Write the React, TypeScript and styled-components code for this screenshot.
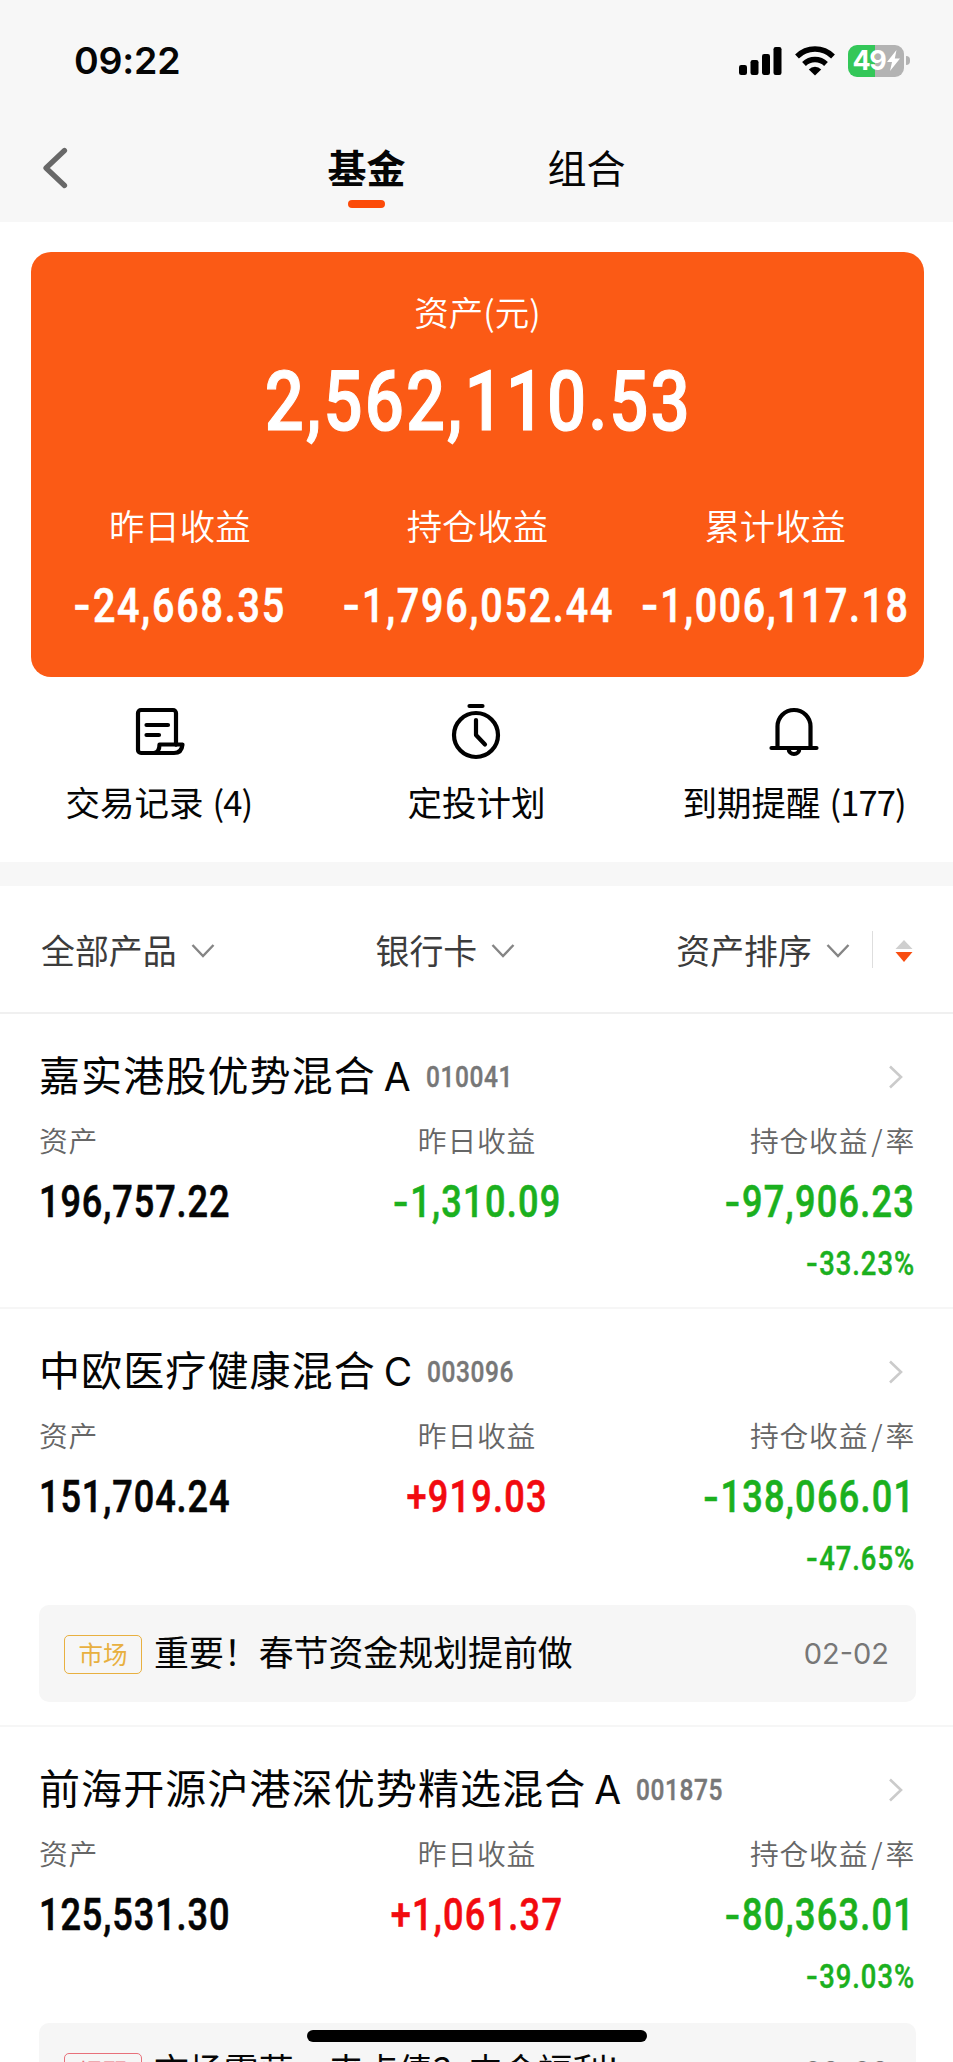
import React from "react";
import styled, { createGlobalStyle } from "styled-components";

const CJK = `"Noto Sans CJK SC", sans-serif`;

const GlobalStyle = createGlobalStyle`
  * { box-sizing: border-box; }
  body { margin: 0; background: #fff; }
`;

const Screen = styled.div`
  position: relative;
  width: 953px;
  height: 2062px;
  overflow: hidden;
  background: #fff;
  color: #050505;
  font-family: ${CJK};
`;

const Header = styled.header`
  height: 222px;
  background: #f7f7f7;
`;

const StatusBar = styled.div`
  height: 121px;
  padding: 0 44px 0 74px;
  display: flex;
  align-items: center;
  justify-content: space-between;
`;

const Clock = styled.span`
  font: 600 37.5px/1 Inter, sans-serif;
  letter-spacing: -0.2px;
`;

const StatusIcons = styled.div`
  display: flex;
  align-items: center;
  gap: 13px;
`;

const Battery = styled.div`
  position: relative;
  width: 56px;
  height: 32px;
  border-radius: 9px;
  background: linear-gradient(90deg, #34c759 49%, #b3b3b3 49%);
  display: flex;
  align-items: center;
  justify-content: center;
  gap: 1px;
  color: #fff;
  font: 700 27px/1 Inter, sans-serif;
  letter-spacing: -1.4px;
  margin-right: 5px;
`;

const BatteryCap = styled.i`
  position: absolute;
  left: 58px;
  top: 11px;
  width: 4px;
  height: 9px;
  border-radius: 0 5px 5px 0;
  background: #b3b3b3;
`;

const NavBar = styled.nav`
  height: 101px;
  display: grid;
  grid-template-columns: 257px 219px 221px;
`;

const Back = styled.div`
  padding: 26px 0 0 41px;
`;

const Tab = styled.div<{ $active?: boolean }>`
  display: flex;
  flex-direction: column;
  align-items: center;
  padding-top: 20px;
  font-size: 39px;
  line-height: 50px;
  font-weight: ${(p) => (p.$active ? 700 : 400)};
  &::after {
    content: "";
    width: 37px;
    height: 8px;
    margin-top: 9px;
    border-radius: 4px;
    background: ${(p) => (p.$active ? "#fc4a08" : "transparent")};
  }
`;

const Card = styled.section`
  width: 893px;
  height: 425px;
  margin: 30px 0 0 31px;
  border-radius: 20px;
  background: #fb5a15;
  color: #fff;
  text-align: center;
`;

const CardLabel = styled.div`
  padding-top: 35px;
  font-size: 34.5px;
  line-height: 48px;
  font-weight: 350;
`;

const CardTotal = styled.div`
  height: 134px;
  padding-left: 2px;
  display: flex;
  align-items: center;
  justify-content: center;
`;

const CardColumns = styled.div`
  padding-top: 32px;
  display: grid;
  grid-template-columns: repeat(3, minmax(0, 1fr));
`;

const CardColumn = styled.div`
  display: flex;
  flex-direction: column;
  align-items: center;
  font-size: 35.4px;
  line-height: 48px;
  font-weight: 350;
  gap: 33px;
`;

type Align = "left" | "center" | "right";

interface FigureStyle {
  $size: number;
  $color?: string;
  $align?: Align;
  $scale?: number;
  $track?: number;
}

const Figure = styled.span<FigureStyle>`
  display: inline-block;
  font-family: Roboto, sans-serif;
  font-weight: 500;
  font-size: ${(p) => p.$size}px;
  line-height: 48px;
  white-space: nowrap;
  color: ${(p) => p.$color ?? "inherit"};
  letter-spacing: ${(p) => p.$track ?? 0}px;
  -webkit-text-stroke: ${(p) => p.$size * 0.014}px currentColor;
  transform: scaleX(${(p) => p.$scale ?? 0.83});
  transform-origin: ${(p) => p.$align ?? "left"} center;
`;

const Sign = styled.span`
  font-family: Inter, sans-serif;
  line-height: 0;
`;

function Amount({ value, ...style }: FigureStyle & { value: string }) {
  const signed = value[0] === "-";
  return (
    <Figure {...style}>
      {signed && <Sign>-</Sign>}
      {signed ? value.slice(1) : value}
    </Figure>
  );
}

const Actions = styled.section`
  height: 185px;
  display: grid;
  grid-template-columns: repeat(3, 1fr);
`;

const Action = styled.div`
  display: flex;
  flex-direction: column;
  align-items: center;
  padding-top: 22px;
  font-size: 34.5px;
  line-height: 48px;
  svg { display: block; }
`;

const ActionLabel = styled.div`
  margin-top: 13px;
  display: flex;
  gap: 9px;
`;

const Count = styled.span`
  letter-spacing: -0.9px;
`;

const Band = styled.div`
  height: 24px;
  background: #f7f7f7;
`;

const Filters = styled.div`
  height: 128px;
  border-bottom: 2px solid #f0f0f0;
  padding: 1px 40px 0 41px;
  display: flex;
  align-items: center;
  font-size: 33.9px;
  line-height: 48px;
  color: #3c3c3c;
`;

const Filter = styled.div<{ $gap: number }>`
  display: flex;
  flex: none;
  align-items: center;
  gap: 14px;
  margin-right: ${(p) => p.$gap}px;
  white-space: nowrap;
  svg { margin-top: 3px; }
`;

const Divider = styled.i`
  width: 1.5px;
  height: 37px;
  background: #dedede;
  margin-right: 23px;
`;

const SortArrows = styled.div`
  display: flex;
  padding-top: 2px;
`;

const Fund = styled.article<{ $height: number }>`
  height: ${(p) => p.$height}px;
  border-bottom: 2px solid #f6f6f6;
  padding: 31px 38px 0 39px;
`;

const FundHead = styled.div`
  height: 60px;
  display: flex;
  align-items: center;
`;

const FundName = styled.h2`
  margin: 0;
  font-size: 41px;
  line-height: 60px;
  font-weight: 400;
  letter-spacing: 1.1px;
`;

const ClassLetter = styled.span`
  margin-left: 8px;
  font-family: Inter, sans-serif;
  font-size: 39px;
  font-weight: 400;
  letter-spacing: 0;
`;

const FundCode = styled.div`
  margin-left: 15px;
  padding-top: 4px;
  flex: 1;
  display: flex;
`;

const HeadArrow = styled.div`
  margin-right: 11px;
  padding-top: 4px;
  display: flex;
`;

const Stats = styled.div`
  display: grid;
  grid-template-columns: 270px 1fr 270px;
  padding-top: 13px;
`;

const Stat = styled.div<{ $align: Align }>`
  display: flex;
  flex-direction: column;
  align-items: ${(p) =>
    p.$align === "left" ? "flex-start" : p.$align === "right" ? "flex-end" : "center"};
`;

const StatLabel = styled.div`
  font-size: 28.8px;
  line-height: 43px;
  letter-spacing: 0.8px;
  font-weight: 350;
  color: #666;
  margin-bottom: 18px;
`;

const Slash = styled.span`
  margin: 0 2px 0 3px;
`;

const Percent = styled.div`
  margin-top: 13px;
  display: flex;
`;

const Notice = styled.div`
  width: 877px;
  height: 97px;
  margin-top: 22px;
  padding: 0 27px 0 25px;
  border-radius: 10px;
  background: #f6f6f6;
  display: flex;
  align-items: center;
`;

const Tag = styled.span<{ $color: string }>`
  width: 78px;
  height: 39px;
  margin-top: 1px;
  border: 1.5px solid ${(p) => p.$color};
  border-radius: 5px;
  color: ${(p) => p.$color};
  font-size: 24.5px;
  line-height: 35px;
  text-align: center;
`;

const NoticeText = styled.span`
  flex: 1;
  margin: -5px 0 0 12px;
  font-size: 34.9px;
  line-height: 48px;
  white-space: pre;
`;

const NoticeDate = styled.span`
  font: 400 29px/40px Inter, sans-serif;
  color: #777;
`;

const HomeIndicator = styled.div`
  position: absolute;
  left: 307px;
  top: 2030px;
  width: 340px;
  height: 12px;
  border-radius: 6px;
  background: #000;
`;

const GREEN = "#1bb01e";
const RED = "#f20a0f";

function ChevronDown() {
  return (
    <svg width="24" height="16" viewBox="0 0 24 16" fill="none">
      <path d="M1.5 2 12 13 22.5 2" stroke="#858585" strokeWidth="2.4" />
    </svg>
  );
}

interface FundData {
  name: string;
  letter: string;
  code: string;
  asset: string;
  day: string;
  held: string;
  rate: string;
  height: number;
  notice?: { tag: string; color: string; text: string; date: string };
}

const funds: FundData[] = [
  { name: "嘉实港股优势混合", letter: "A", code: "010041", asset: "196,757.22", day: "-1,310.09", held: "-97,906.23", rate: "-33.23%", height: 295 },
  {
    name: "中欧医疗健康混合", letter: "C", code: "003096", asset: "151,704.24", day: "+919.03", held: "-138,066.01", rate: "-47.65%", height: 418,
    notice: { tag: "市场", color: "#e8b040", text: "重要！春节资金规划提前做", date: "02-02" },
  },
  {
    name: "前海开源沪港深优势精选混合", letter: "A", code: "001875", asset: "125,531.30", day: "+1,061.37", held: "-80,363.01", rate: "-39.03%", height: 418,
    notice: { tag: "提醒", color: "#e8707a", text: "市场震荡，来点债？内含福利!", date: "02-02" },
  },
];

function FundRow({ fund }: { fund: FundData }) {
  return (
    <Fund $height={fund.height}>
      <FundHead>
        <FundName>
          {fund.name}
          <ClassLetter>{fund.letter}</ClassLetter>
        </FundName>
        <FundCode>
          <Amount value={fund.code} $size={29.5} $color="#777" $track={0.7} />
        </FundCode>
        <HeadArrow>
          <svg width="16" height="24" viewBox="0 0 16 24" fill="none">
            <path d="M2 1.5 13 12 2 22.5" stroke="#cbcbcb" strokeWidth="2.6" />
          </svg>
        </HeadArrow>
      </FundHead>
      <Stats>
        <Stat $align="left">
          <StatLabel>资产</StatLabel>
          <Amount value={fund.asset} $size={43.5} $track={1.1} />
        </Stat>
        <Stat $align="center">
          <StatLabel>昨日收益</StatLabel>
          <Amount value={fund.day} $size={43.5} $track={1.5} $align="center" $color={fund.day[0] === "-" ? GREEN : RED} />
        </Stat>
        <Stat $align="right">
          <StatLabel>持仓收益<Slash>/</Slash>率</StatLabel>
          <Amount value={fund.held} $size={43.5} $track={1.5} $align="right" $color={GREEN} />
          <Percent>
            <Amount value={fund.rate} $size={33} $track={1.2} $align="right" $color={GREEN} />
          </Percent>
        </Stat>
      </Stats>
      {fund.notice && (
        <Notice>
          <Tag $color={fund.notice.color}>{fund.notice.tag}</Tag>
          <NoticeText>{fund.notice.text}</NoticeText>
          <NoticeDate>{fund.notice.date}</NoticeDate>
        </Notice>
      )}
    </Fund>
  );
}

export default function App() {
  return (
    <Screen>
      <GlobalStyle />
      <Header>
        <StatusBar>
          <Clock>09:22</Clock>
          <StatusIcons>
            <svg width="43" height="30" viewBox="0 0 43 30">
              <rect x="0" y="19" width="8" height="10" rx="2.2" />
              <rect x="11.5" y="14" width="8" height="15" rx="2.2" />
              <rect x="23" y="8" width="8" height="21" rx="2.2" />
              <rect x="34.5" y="1" width="8" height="28" rx="2.2" />
            </svg>
            <svg width="40" height="30" viewBox="0 0 40 30" fill="none" stroke="#000" strokeWidth="5.4">
              <path d="M2 10.5a25.5 25.5 0 0 1 36 0" />
              <path d="M9 18a15.8 15.8 0 0 1 22 0" />
              <path d="M13.8 23.5a8.6 8.6 0 0 1 12.4 0L20 29.6Z" fill="#000" stroke="none" />
            </svg>
            <Battery>
              49
              <svg width="13" height="21" viewBox="0 0 13 21">
                <path d="M9.5 0 0 12h5L3 21 13 8.5H7.8Z" fill="#fff" />
              </svg>
              <BatteryCap />
            </Battery>
          </StatusIcons>
        </StatusBar>
        <NavBar>
          <Back>
            <svg width="28" height="42" viewBox="0 0 28 42" fill="none">
              <path d="M23.5 3.5 5 21l18.5 17.5" stroke="#686868" strokeWidth="5.2" strokeLinecap="round" strokeLinejoin="round" />
            </svg>
          </Back>
          <Tab $active>基金</Tab>
          <Tab>组合</Tab>
        </NavBar>
      </Header>

      <Card>
        <CardLabel>资产(元)</CardLabel>
        <CardTotal>
          <Amount value="2,562,110.53" $size={84} $scale={0.82} $track={2.5} $align="center" />
        </CardTotal>
        <CardColumns>
          <CardColumn>
            昨日收益
            <Amount value="-24,668.35" $size={47.5} $track={2.2} $align="center" />
          </CardColumn>
          <CardColumn>
            持仓收益
            <Amount value="-1,796,052.44" $size={47.5} $track={2.2} $align="center" />
          </CardColumn>
          <CardColumn>
            累计收益
            <Amount value="-1,006,117.18" $size={47.5} $track={1.9} $align="center" />
          </CardColumn>
        </CardColumns>
      </Card>

      <Actions>
        <Action>
          <svg width="64" height="65" viewBox="0 -1 64 65" fill="none" stroke="#000" strokeWidth="4.2" strokeLinecap="round" strokeLinejoin="round">
            <path d="M49 45V13a3 3 0 0 0-3-3H14a3 3 0 0 0-3 3v37a3 3 0 0 0 3 3h33c5 0 8-3 8.5-8.5H32.5c0 5-2 8.5-6 8.5" />
            <path d="M19.5 25H41M19.5 35H32" />
          </svg>
          <ActionLabel>交易记录<Count>(4)</Count></ActionLabel>
        </Action>
        <Action>
          <svg width="64" height="65" viewBox="0 0 64 65" fill="none" stroke="#000" strokeWidth="4.2" strokeLinecap="round" strokeLinejoin="round">
            <circle cx="32" cy="36" r="22" />
            <path d="M25.5 7h13M32 21v15l9 9.5" />
          </svg>
          <ActionLabel>定投计划</ActionLabel>
        </Action>
        <Action>
          <svg width="64" height="65" viewBox="0 -0.5 64 65" fill="none" stroke="#000" strokeWidth="4.2" strokeLinecap="round" strokeLinejoin="round">
            <path d="M15.5 47V27a16.5 16.5 0 0 1 33 0V47M9.5 48.5H54.5M26.7 49.5a5.3 5 0 0 0 10.6 0" />
          </svg>
          <ActionLabel>到期提醒<Count>(177)</Count></ActionLabel>
        </Action>
      </Actions>
      <Band />
      <Filters>
        <Filter $gap={161}>全部产品<ChevronDown /></Filter>
        <Filter $gap={161}>银行卡<ChevronDown /></Filter>
        <Filter $gap={22}>资产排序<ChevronDown /></Filter>
        <Divider />
        <SortArrows>
          <svg width="18" height="22" viewBox="0 0 18 22">
            <path d="M9 0 17.5 9H.5Z" fill="#cfcfcf" />
            <path d="M9 22 17.5 12H.5Z" fill="#f84d10" />
          </svg>
        </SortArrows>
      </Filters>

      {funds.map((f) => (
        <FundRow key={f.code} fund={f} />
      ))}
      <HomeIndicator />
    </Screen>
  );
}
